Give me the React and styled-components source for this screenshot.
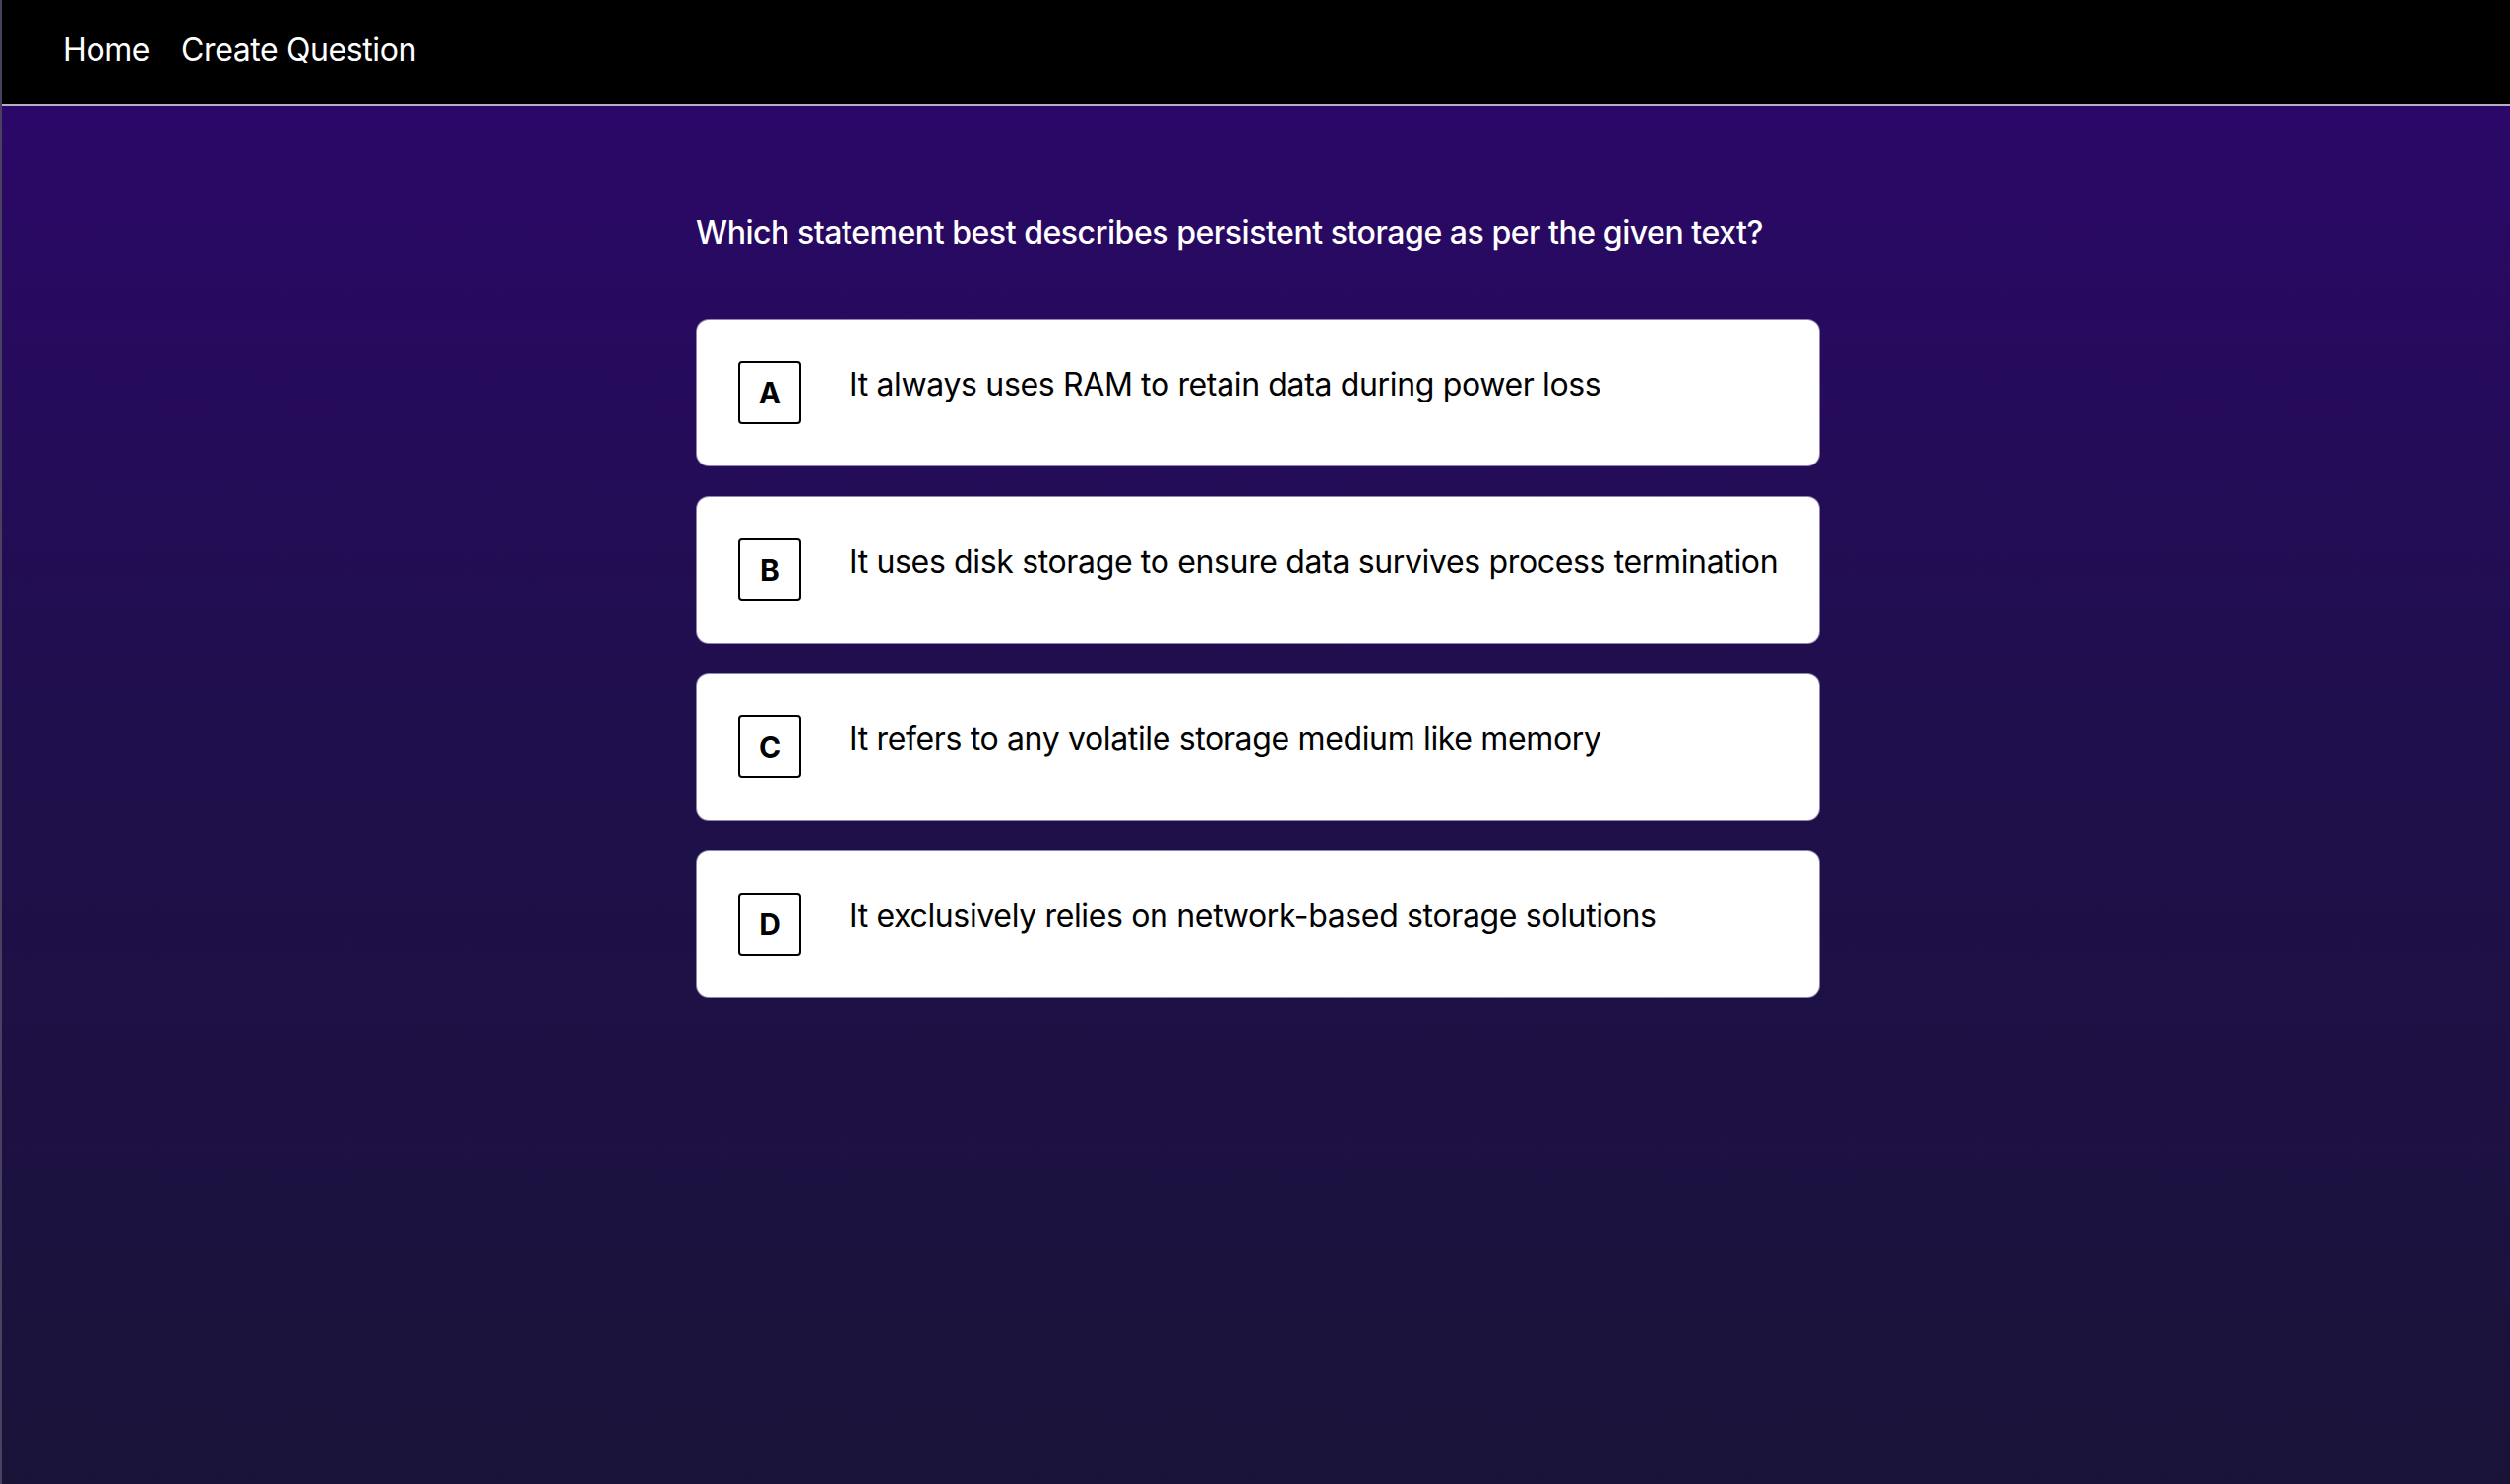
import React from "react";
import styled, { createGlobalStyle } from "styled-components";

const Global = createGlobalStyle`
  html, body {
    margin: 0;
    padding: 0;
    background: #1a1338;
  }
  body {
    font-family: Inter, "Noto Sans", sans-serif;
  }
  * {
    box-sizing: border-box;
  }
`;

const Page = styled.div`
  min-height: 1508px;
  border-left: 2px solid #4a4060;
  display: flex;
  flex-direction: column;
`;

const Nav = styled.nav`
  height: 108px;
  background: #000;
  border-bottom: 2px solid #b4b0c4;
  display: flex;
  align-items: center;
  gap: 32px;
  padding: 0 0 6px 62px;

  a {
    color: #fff;
    font-size: 32px;
    letter-spacing: -0.4px;
    text-decoration: none;
  }
`;

const Main = styled.main`
  flex: 1;
  background: linear-gradient(to bottom, #2b0868 0%, #1f0f4c 45%, #1a1338 100%);
  padding-top: 108px;
`;

const Column = styled.div`
  width: 1140px;
  margin: 0 auto;
  transform: translateX(2px);
`;

const Question = styled.h1`
  margin: 0 0 67px -1px;
  color: #fff;
  font-size: 32px;
  font-weight: 500;
  line-height: 1.3;
  letter-spacing: -0.45px;
`;

const Options = styled.div`
  display: flex;
  flex-direction: column;
  gap: 32px;
`;

const Card = styled.div`
  background: #fff;
  border-radius: 12px;
  height: 148px;
  padding: 42px 40px 42px 42px;
  display: flex;
  align-items: flex-start;
  gap: 49px;
  box-shadow: 0 0 0 1px rgba(220, 214, 240, 0.6);
`;

const Letter = styled.div`
  flex: none;
  width: 64px;
  height: 64px;
  border: 2px solid #000;
  border-radius: 4px;
  display: flex;
  align-items: center;
  justify-content: center;
  font-weight: 700;
  font-size: 30px;
  color: #000;
`;

const Text = styled.div`
  padding-top: 2px;
  font-size: 32px;
  line-height: 1.4;
  color: #000;
  letter-spacing: -0.35px;
`;

const options = [
  ["A", "It always uses RAM to retain data during power loss"],
  ["B", "It uses disk storage to ensure data survives process termination"],
  ["C", "It refers to any volatile storage medium like memory"],
  ["D", "It exclusively relies on network-based storage solutions"],
];

export default function App() {
  return (
    <>
      <Global />
      <Page>
        <Nav>
          <a href="#">Home</a>
          <a href="#">Create Question</a>
        </Nav>
        <Main>
          <Column>
            <Question>
              Which statement best describes persistent storage as per the given text?
            </Question>
            <Options>
              {options.map(([l, t]) => (
                <Card key={l}>
                  <Letter>{l}</Letter>
                  <Text>{t}</Text>
                </Card>
              ))}
            </Options>
          </Column>
        </Main>
      </Page>
    </>
  );
}
